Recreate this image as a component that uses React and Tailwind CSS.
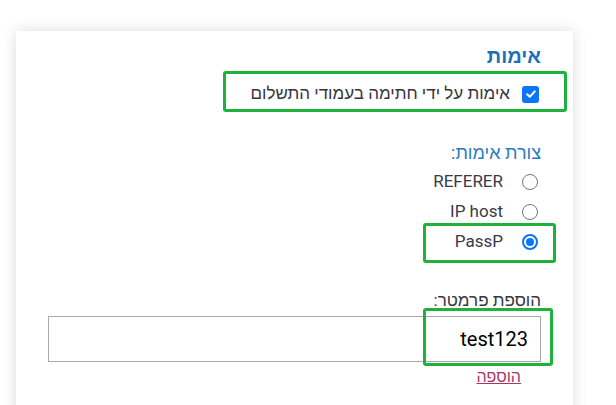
import React from "react";

function Radio({ checked }) {
  return checked ? (
    <span className="w-4 h-4 rounded-full border-2 border-[#0b75f5] flex items-center justify-center shrink-0">
      <span className="w-[8px] h-[8px] rounded-full bg-[#0b75f5]"></span>
    </span>
  ) : (
    <span className="w-4 h-4 rounded-full border border-[#767676] bg-white shrink-0"></span>
  );
}

export default function App() {
  const font = { fontFamily: 'Roboto, "Liberation Sans", Arial, sans-serif' };
  return (
    <div className="w-[616px] h-[405px] bg-white overflow-hidden" style={font}>
      <div
        dir="rtl"
        className="relative mt-[31px] ml-[16px] w-[557px] h-[400px] bg-white shadow-[0_0_14px_rgba(0,0,0,0.14)] px-[32px] pt-[13px]"
      >
        <h2 className="text-[20px] leading-[24px] font-bold text-[#1a70b8]">אימות</h2>

        <label className="flex items-center gap-[12px] mt-[14px] h-[24px] text-[17px] text-[#363640]">
          <span className="w-[17px] h-[17px] rounded-[3px] bg-[#0b75f5] flex items-center justify-center shrink-0 mr-[2px]">
            <svg width="12" height="12" viewBox="0 0 12 12">
              <path d="M2.2 6.3 L4.8 8.8 L9.8 3.4" fill="none" stroke="white" strokeWidth="2" strokeLinecap="round" strokeLinejoin="round" />
            </svg>
          </span>
          <span>אימות על ידי חתימה בעמודי התשלום</span>
        </label>

        <div className="mt-[36px] h-[22px] text-[18px] leading-[22px] text-[#2a7cc0]">צורת אימות:</div>

        <div className="mt-[6px] flex flex-col gap-[6px] text-[17px] text-[#3a3a44]">
          {[
            ["REFERER", false],
            ["IP host", false],
            ["PassP", true],
          ].map(([t, c]) => (
            <div key={t} className="flex items-center gap-[19px] h-[24px] mr-[3px]">
              <Radio checked={c} />
              <span>{t}</span>
            </div>
          ))}
        </div>

        <div className="mt-[35px] h-[22px] text-[17px] leading-[22px] text-[#363640]">הוספת פרמטר:</div>
        <div className="mt-[5px] h-[46px] border border-[#a9a9a9] flex items-center pr-[12px] text-[20px] text-black">
          test123
        </div>
        <div className="mt-[6px] pr-[20px] text-[16px] leading-[18px]">
          <a href="#" className="underline text-[#a8385f]">הוספה</a>
        </div>

        <div className="absolute left-[207px] top-[40px] w-[344px] h-[41px] border-[3px] border-[#1fb23b] rounded-[3px] pointer-events-none"></div>
        <div className="absolute left-[407px] top-[192px] w-[133px] h-[40px] border-[3px] border-[#1fb23b] rounded-[3px] pointer-events-none"></div>
        <div className="absolute left-[407px] top-[277px] w-[130px] h-[58px] border-[3px] border-[#1fb23b] rounded-[3px] pointer-events-none"></div>
      </div>
    </div>
  );
}
